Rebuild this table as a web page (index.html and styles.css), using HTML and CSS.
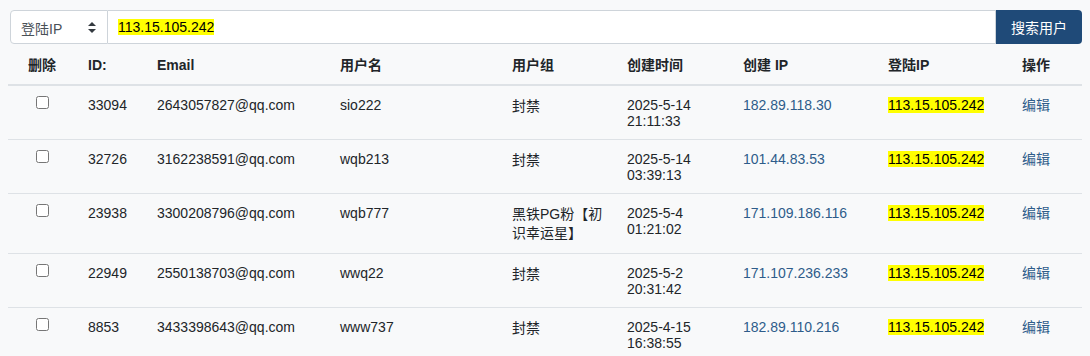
FILE: index.html
```html
<!DOCTYPE html>
<html lang="zh">
<head>
<meta charset="utf-8">
<title>用户搜索</title>
<link rel="stylesheet" href="styles.css">
</head>
<body>
<div class="search-group">
  <div class="select">
    <span>登陆IP</span>
    <svg class="arrows" width="8" height="11" viewBox="0 0 8 11"><path d="M4 0 L8 4 L0 4 Z M0 7 L8 7 L4 11 Z" fill="#343a40"/></svg>
  </div>
  <div class="search-input"><mark>113.15.105.242</mark></div>
  <button class="btn">搜索用户</button>
</div>
<table class="users">
  <colgroup>
    <col class="c-del"><col class="c-id"><col class="c-email"><col class="c-name"><col class="c-group"><col class="c-time"><col class="c-cip"><col class="c-lip"><col class="c-op">
  </colgroup>
  <thead>
    <tr><th class="center">删除</th><th>ID:</th><th>Email</th><th>用户名</th><th>用户组</th><th>创建时间</th><th>创建 IP</th><th>登陆IP</th><th>操作</th></tr>
  </thead>
  <tbody>
    <tr><td class="center"><input type="checkbox"></td><td>33094</td><td>2643057827@qq.com</td><td>sio222</td><td class="cjk">封禁</td><td>2025-5-14<br>21:11:33</td><td class="ip">182.89.118.30</td><td><mark>113.15.105.242</mark></td><td><a href="#" class="link">编辑</a></td></tr>
    <tr><td class="center"><input type="checkbox"></td><td>32726</td><td>3162238591@qq.com</td><td>wqb213</td><td class="cjk">封禁</td><td>2025-5-14<br>03:39:13</td><td class="ip">101.44.83.53</td><td><mark>113.15.105.242</mark></td><td><a href="#" class="link">编辑</a></td></tr>
    <tr><td class="center"><input type="checkbox"></td><td>23938</td><td>3300208796@qq.com</td><td>wqb777</td><td class="cjk">黑铁PG粉【初识幸运星】</td><td>2025-5-4<br>01:21:02</td><td class="ip">171.109.186.116</td><td><mark>113.15.105.242</mark></td><td><a href="#" class="link">编辑</a></td></tr>
    <tr><td class="center"><input type="checkbox"></td><td>22949</td><td>2550138703@qq.com</td><td>wwq22</td><td class="cjk">封禁</td><td>2025-5-2<br>20:31:42</td><td class="ip">171.107.236.233</td><td><mark>113.15.105.242</mark></td><td><a href="#" class="link">编辑</a></td></tr>
    <tr><td class="center"><input type="checkbox"></td><td>8853</td><td>3433398643@qq.com</td><td>www737</td><td class="cjk">封禁</td><td>2025-4-15<br>16:38:55</td><td class="ip">182.89.110.216</td><td><mark>113.15.105.242</mark></td><td><a href="#" class="link">编辑</a></td></tr>
  </tbody>
</table>
</body>
</html>
```
FILE: styles.css
```css
html, body {
  background: #f8f9fa;
}
body {
  margin: 8px;
  font-family: "Liberation Sans", Arial, "Noto Sans CJK SC", sans-serif;
  font-size: 14px;
  color: #212529;
}
.search-group {
  display: flex;
  height: 34px;
  margin: 2px 0 2px 2px;
  box-sizing: border-box;
}
.select {
  width: 98px;
  box-sizing: border-box;
  display: flex;
  align-items: center;
  justify-content: space-between;
  padding: 0 11px 0 10px;
  background: #fff;
  border: 1px solid #ced4da;
  border-radius: 4px 0 0 4px;
  color: #495057;
}
.select span { padding-top: 1px; }
.arrows { display: block; }
.search-input {
  flex: 1;
  display: flex;
  align-items: center;
  padding: 0 10px;
  background: #fff;
  border: 1px solid #ced4da;
  border-left: none;
  color: #000;
}
mark {
  background: #ffff00;
  color: #000;
}
.btn {
  width: 86px;
  border: none;
  border-radius: 0 4px 4px 0;
  background: #1f4a78;
  color: #fff;
  font-family: inherit;
  font-size: 14px;
  padding: 0 15px;
}
.users {
  width: 100%;
  border-collapse: collapse;
  table-layout: fixed;
}
.c-del { width: 68px; }
.c-id { width: 69px; }
.c-email { width: 183px; }
.c-name { width: 172px; }
.c-group { width: 115px; }
.c-time { width: 116px; }
.c-cip { width: 145px; }
.c-lip { width: 134px; }
.c-op { width: 72px; }
.users th, .users td {
  padding: 11px 12px 10px;
  line-height: 16px;
  text-align: left;
  vertical-align: top;
}
.users th {
  font-weight: bold;
  padding-bottom: 11px;
  border-bottom: 2px solid #dee2e6;
}
.users td {
  border-bottom: 1px solid #dee2e6;
}
.users .center { text-align: center; }
.users td.cjk { line-height: 19px; }
.users input[type="checkbox"] {
  margin: -1px 0 0 1px;
  vertical-align: top;
  width: 13px;
  height: 13px;
}
.ip { color: #2e5c8a; }
.link {
  color: #2e5c8a;
  text-decoration: none;
}
```
